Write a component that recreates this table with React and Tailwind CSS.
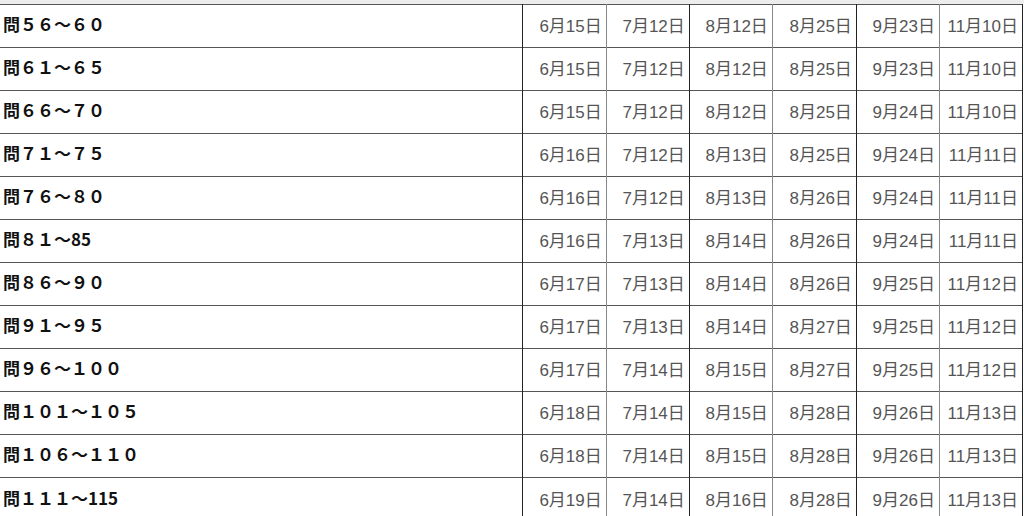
const rows = [
  ["問５６～６０", "6月15日", "7月12日", "8月12日", "8月25日", "9月23日", "11月10日"],
  ["問６１～６５", "6月15日", "7月12日", "8月12日", "8月25日", "9月23日", "11月10日"],
  ["問６６～７０", "6月15日", "7月12日", "8月12日", "8月25日", "9月24日", "11月10日"],
  ["問７１～７５", "6月16日", "7月12日", "8月13日", "8月25日", "9月24日", "11月11日"],
  ["問７６～８０", "6月16日", "7月12日", "8月13日", "8月26日", "9月24日", "11月11日"],
  ["問８１～85", "6月16日", "7月13日", "8月14日", "8月26日", "9月24日", "11月11日"],
  ["問８６～９０", "6月17日", "7月13日", "8月14日", "8月26日", "9月25日", "11月12日"],
  ["問９１～９５", "6月17日", "7月13日", "8月14日", "8月27日", "9月25日", "11月12日"],
  ["問９６～１００", "6月17日", "7月14日", "8月15日", "8月27日", "9月25日", "11月12日"],
  ["問１０１～１０５", "6月18日", "7月14日", "8月15日", "8月28日", "9月26日", "11月13日"],
  ["問１０６～１１０", "6月18日", "7月14日", "8月15日", "8月28日", "9月26日", "11月13日"],
  ["問１１１～115", "6月19日", "7月14日", "8月16日", "8月28日", "9月26日", "11月13日"],
];

// column widths incl. left border line
const widths = ["w-[522px]", "w-[84px]", "w-[83px]", "w-[83px]", "w-[84px]", "w-[83px]", "w-[83px]"];

export default function App() {
  return (
    <div className="w-[1024px] h-[516px] overflow-hidden bg-white font-['Liberation_Sans','Noto_Sans_CJK_JP',sans-serif]">
      {/* grey strip above the table */}
      <div className="h-[4px] bg-[#ededed]" />
      <table className="border-collapse table-fixed w-[1023px]">
        <tbody>
          {rows.map((row) => (
            <tr key={row[0]} className="h-[43px] border-t border-[#555]">
              {row.map((cell, i) => (
                <td
                  key={i}
                  className={
                    i === 0
                      ? `${widths[i]} p-0 pb-[4px] pl-[3px] text-[17px] font-bold text-[#111] whitespace-nowrap font-['Noto_Sans_CJK_JP',sans-serif]`
                      : `${widths[i]} p-0 pt-[2px] pr-[4px] text-right text-[17px] text-[#555] whitespace-nowrap border-l ${
                          i % 2 === 1 ? "border-[#222]" : "border-[#888]"
                        } ${i === 6 ? "border-r border-r-[#222]" : ""}`
                  }
                >
                  {cell}
                </td>
              ))}
            </tr>
          ))}
        </tbody>
      </table>
    </div>
  );
}
